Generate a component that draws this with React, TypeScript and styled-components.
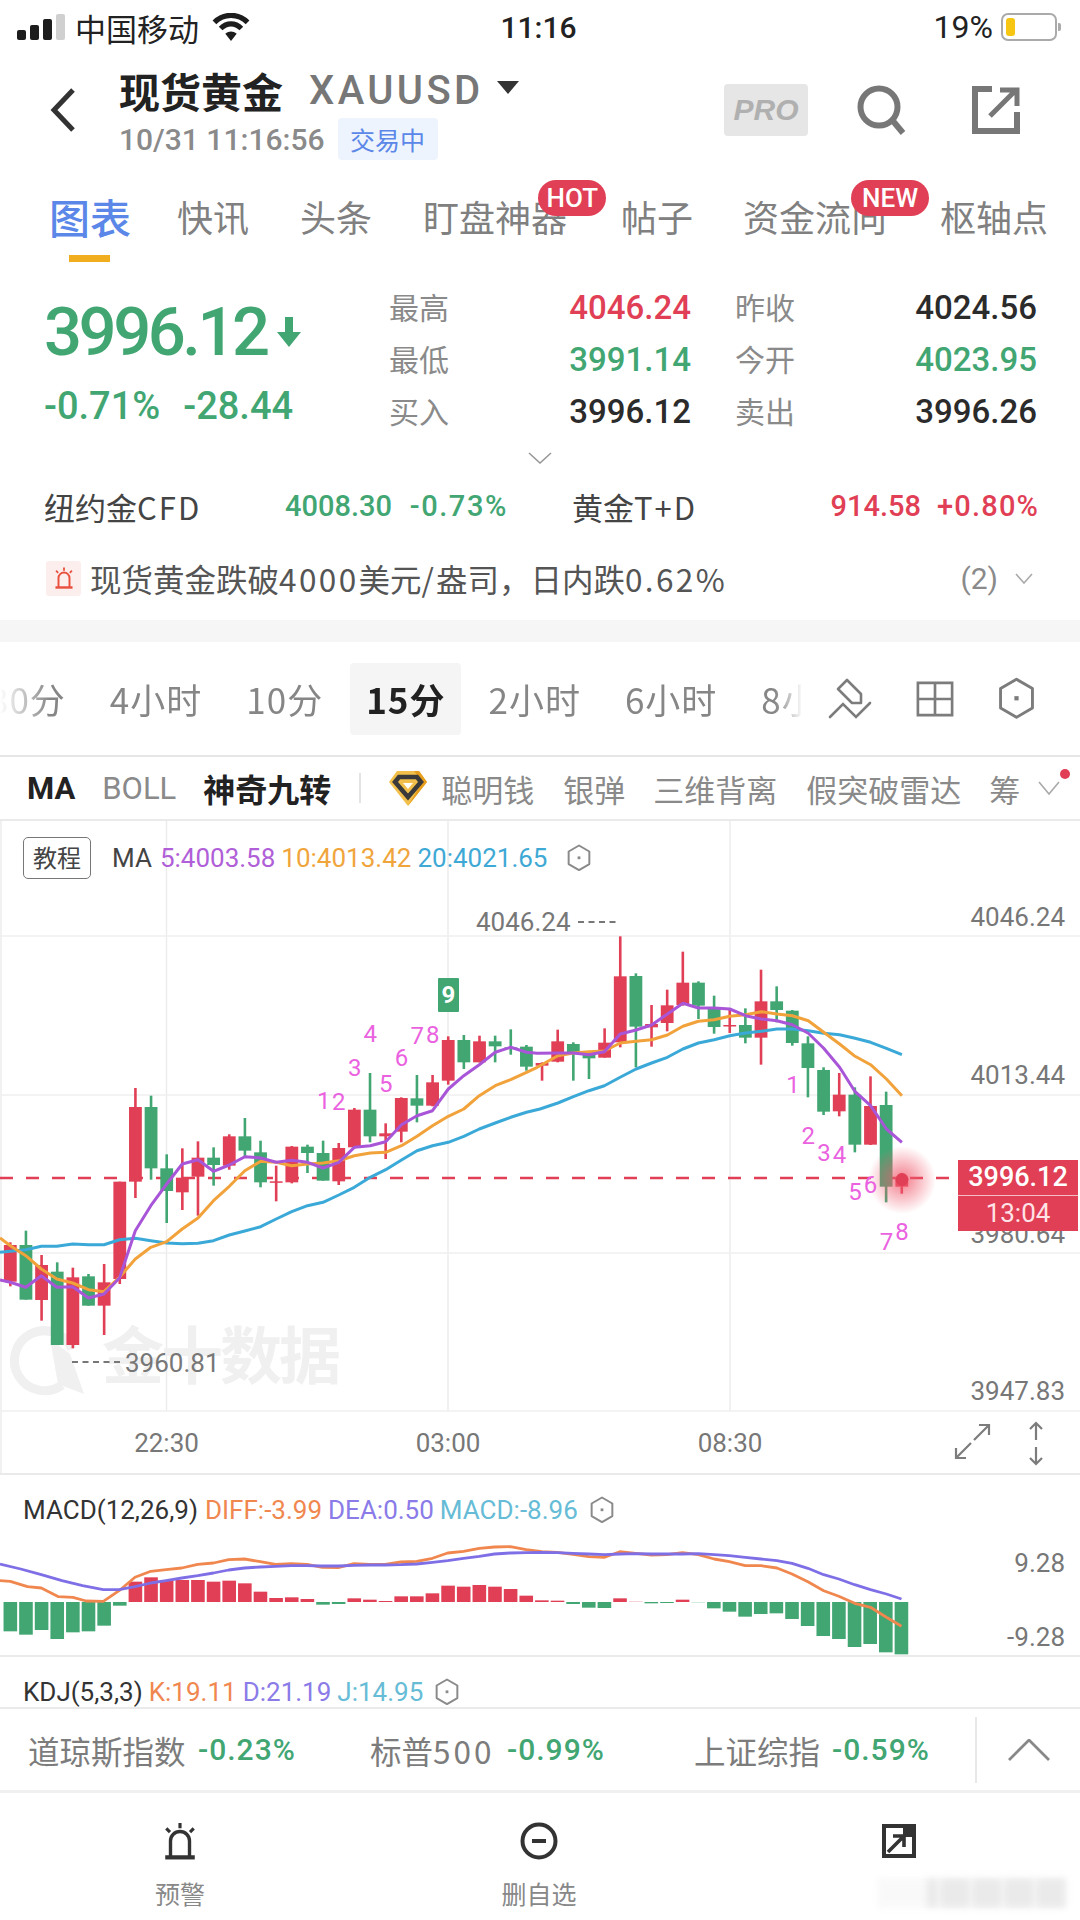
import React from "react";
import styled, { createGlobalStyle } from "styled-components";

const RED = "#e03f55";
const GREEN = "#42a673";
const BLUE = "#5b87e8";
const CJK = `"Noto Sans CJK SC", "Noto Sans", sans-serif`;
const NUM = `Roboto, "Noto Sans CJK SC", sans-serif`;

const Global = createGlobalStyle`
  html, body { margin: 0; padding: 0; background: #fff; }
  body { font-family: ${CJK}; }
  * { box-sizing: border-box; }
`;

const Page = styled.div`
  position: relative;
  width: 1080px;
  height: 1920px;
  overflow: hidden;
  background: #fff;
  color: #333;
`;

const Latin = styled.span<{ $ls: number }>`
  letter-spacing: ${(p) => p.$ls}px;
`;

/* status bar */
const StatusBar = styled.div`
  height: 54px;
  display: grid;
  grid-template-columns: 1fr auto 1fr;
  align-items: center;
  padding: 0 20px 0 17px;
  color: #222;
`;
const StatusLeft = styled.div`
  display: flex;
  align-items: center;
  font-size: 31px;
  font-weight: 400;
  line-height: 1;
  gap: 10px;
`;
const StatusWifi = styled.svg`
  margin-left: 2px;
`;
const StatusTime = styled.div`
  font-family: ${NUM};
  font-size: 30px;
  font-weight: 500;
`;
const StatusRight = styled.div`
  display: flex;
  justify-content: flex-end;
  align-items: center;
  font-family: ${NUM};
  font-size: 32px;
  gap: 8px;
`;
const Signal = styled.div`
  display: flex;
  align-items: flex-end;
  gap: 4px;
  height: 26px;
`;
const SignalBar = styled.i<{ $h: number; $off?: boolean }>`
  display: block;
  width: 9px;
  height: ${(p) => p.$h}px;
  border-radius: 2px;
  background: ${(p) => (p.$off ? "#d0d0d0" : "#1d1d1d")};
`;
const Battery = styled.div`
  position: relative;
  width: 56px;
  height: 28px;
  border: 2px solid #aaa;
  border-radius: 7px;
  padding: 3px;
  margin-right: 3px;
  &::after {
    content: "";
    position: absolute;
    right: -6px;
    top: 8px;
    width: 3px;
    height: 8px;
    border-radius: 0 2px 2px 0;
    background: #aaa;
  }
`;
const BatteryFill = styled.div`
  width: 9px;
  height: 100%;
  border-radius: 3px;
  background: #f6c612;
`;

/* header */
const Header = styled.div`
  height: 114px;
  display: flex;
  align-items: flex-start;
  padding: 16px 60px 0 50px;
`;
const BackBtn = styled.svg`
  width: 26px;
  height: 44px;
  margin-top: 18px;
  flex: none;
`;
const HeadText = styled.div`
  margin-left: 43px;
  display: flex;
  flex-direction: column;
`;
const TitleRow = styled.div`
  display: flex;
  align-items: center;
  height: 40px;
`;
const Title = styled.div`
  font-size: 41px;
  font-weight: 700;
  color: #222;
  line-height: 1;
`;
const Symbol = styled.div`
  font-family: ${NUM};
  font-size: 40px;
  font-weight: 500;
  color: #777;
  margin-left: 26px;
  letter-spacing: 3.4px;
`;
const Caret = styled.div`
  width: 0;
  height: 0;
  margin: -6px 0 0 13px;
  border-left: 11px solid transparent;
  border-right: 11px solid transparent;
  border-top: 13px solid #333;
`;
const SubRow = styled.div`
  display: flex;
  align-items: center;
  margin-top: 8px;
`;
const Stamp = styled.div`
  font-family: ${NUM};
  font-size: 30px;
  font-weight: 500;
  color: #8a8a8a;
`;
const StatusTag = styled.div`
  margin-left: 13px;
  width: 100px;
  height: 42px;
  background: #eef4fe;
  border-radius: 4px;
  color: ${BLUE};
  font-size: 25px;
  line-height: 42px;
  text-align: center;
`;
const HeadActions = styled.div`
  margin-left: auto;
  display: flex;
  align-items: center;
  padding-top: 14px;
`;
const ProBadge = styled.div`
  width: 84px;
  height: 52px;
  background: #e6e6e6;
  border-radius: 4px;
  color: #b0b0b0;
  font-family: "Liberation Sans", sans-serif;
  font-size: 30px;
  font-weight: 700;
  font-style: italic;
  line-height: 52px;
  text-align: center;
`;
const HeadIcon = styled.svg<{ $ml: number }>`
  display: block;
  margin-left: ${(p) => p.$ml}px;
`;

/* tabs */
const Tabs = styled.div`
  height: 102px;
  display: flex;
  align-items: flex-start;
  padding: 23px 0 0 49px;
`;
const Tab = styled.div<{ $active?: boolean; $ml?: number }>`
  position: relative;
  margin-left: ${(p) => p.$ml || 0}px;
  font-size: ${(p) => (p.$active ? 41 : 36)}px;
  font-weight: ${(p) => (p.$active ? 500 : 400)};
  line-height: 50px;
  color: ${(p) => (p.$active ? BLUE : "#808080")};
  white-space: nowrap;
`;
const TabMark = styled.div`
  position: absolute;
  left: 20px;
  top: 64px;
  width: 41px;
  height: 7px;
  background: #f0ad1e;
`;
const TabBadge = styled.div<{ $right: number; $pad: number }>`
  position: absolute;
  top: -11px;
  right: ${(p) => p.$right}px;
  height: 36px;
  padding: 0 ${(p) => p.$pad}px;
  border-radius: 18px;
  background: ${RED};
  color: #fff;
  font-family: ${NUM};
  font-size: 26px;
  font-weight: 500;
  line-height: 36px;
`;

/* quote */
const Quote = styled.div`
  height: 166px;
  display: flex;
  padding: 12px 43px 0 44px;
`;
const PriceCol = styled.div`
  width: 345px;
  flex: none;
  padding-top: 12px;
`;
const BigPrice = styled.div`
  display: flex;
  align-items: center;
  height: 76px;
  color: ${GREEN};
  font-family: ${NUM};
  font-size: 67px;
  font-weight: 500;
  letter-spacing: -3.5px;
  line-height: 76px;
`;
const DownArrow = styled.svg`
  margin-left: 9px;
  flex: none;
`;
const PriceDelta = styled.div`
  display: flex;
  gap: 23px;
  margin-top: 14px;
  color: ${GREEN};
  font-family: ${NUM};
  font-size: 38px;
  font-weight: 500;
  line-height: 44px;
`;
const StatGrid = styled.div`
  flex: 1;
  display: grid;
  grid-template-columns: 62px 284px 62px 1fr;
  grid-auto-rows: 52px;
  align-items: center;
`;
const StatLabel = styled.div`
  font-size: 30px;
  color: #8a8a8a;
  line-height: 48px;
  padding-bottom: 4px;
  white-space: nowrap;
`;
const StatValue = styled.div<{ $c: string; $pad?: number }>`
  font-family: ${NUM};
  font-size: 33px;
  font-weight: 500;
  color: ${(p) => p.$c};
  text-align: right;
  padding-right: ${(p) => p.$pad || 0}px;
  line-height: 52px;
`;
const Expand = styled.div`
  height: 36px;
  display: flex;
  justify-content: center;
  padding-top: 16px;
`;

const Related = styled.div`
  height: 68px;
  display: flex;
  align-items: center;
  padding: 0 43px 0 44px;
`;
const RelatedName = styled.div<{ $w: number }>`
  width: ${(p) => p.$w}px;
  font-size: 31px;
  color: #444;
  white-space: nowrap;
`;
const RelatedNum = styled.div<{ $c: string; $w: number; $mr?: number; $ls?: number }>`
  font-family: ${NUM};
  font-size: 29px;
  font-weight: 500;
  letter-spacing: ${(p) => p.$ls || 0}px;
  color: ${(p) => p.$c};
  width: ${(p) => p.$w}px;
  text-align: right;
  margin-right: ${(p) => p.$mr || 0}px;
  white-space: nowrap;
`;
const Flexible = styled.div`
  flex: 1;
`;

const AlertRow = styled.div`
  height: 80px;
  display: flex;
  align-items: center;
  padding: 0 47px 4px 46px;
`;
const AlertIcon = styled.div`
  width: 35px;
  height: 35px;
  background: #fdeeee;
  border-radius: 3px;
  display: flex;
  align-items: center;
  justify-content: center;
  flex: none;
`;
const AlertText = styled.div`
  margin-left: 9px;
  font-size: 31.5px;
  color: #555;
  white-space: nowrap;
`;
const AlertMore = styled.div`
  margin-left: auto;
  display: flex;
  align-items: center;
  gap: 17px;
  font-family: ${NUM};
  font-size: 30px;
  color: #8a8a8a;
`;

const Gap = styled.div`
  height: 22px;
  background: #f6f6f6;
`;

/* periods */
const Periods = styled.div`
  height: 115px;
  display: flex;
  align-items: center;
  border-bottom: 2px solid #e6e6e6;
`;
const PeriodStrip = styled.div`
  width: 803px;
  height: 72px;
  overflow: hidden;
  flex: none;
  -webkit-mask-image: linear-gradient(90deg, transparent 0, #000 50px, #000 775px, transparent 803px);
  mask-image: linear-gradient(90deg, transparent 0, #000 50px, #000 775px, transparent 803px);
`;
const PeriodTrack = styled.div`
  display: flex;
  align-items: center;
  height: 72px;
  margin-left: -33px;
  width: 1000px;
`;
const Period = styled.div<{ $active?: boolean }>`
  height: 72px;
  padding: 0 ${(p) => (p.$active ? 16 : 22)}px;
  margin: 0 ${(p) => (p.$active ? 5 : 0)}px;
  border-radius: 4px;
  background: ${(p) => (p.$active ? "#f5f5f5" : "transparent")};
  font-size: 35px;
  letter-spacing: 1px;
  line-height: 72px;
  font-weight: ${(p) => (p.$active ? 700 : 400)};
  color: ${(p) => (p.$active ? "#222" : "#868686")};
  white-space: nowrap;
`;
const ToolIcon = styled.svg<{ $ml: number }>`
  margin-left: ${(p) => p.$ml}px;
  flex: none;
`;
const ToolBox = styled.div<{ $ml: number }>`
  margin-left: ${(p) => p.$ml}px;
  flex: none;
`;

/* indicators */
const Indicators = styled.div`
  height: 64px;
  display: flex;
  align-items: center;
  padding: 0 0 0 27px;
  border-bottom: 2px solid #eaeaea;
  position: relative;
`;
const Ind = styled.div<{ $ml: number; $bold?: boolean; $size?: number }>`
  margin-left: ${(p) => p.$ml}px;
  font-family: ${CJK};
  font-size: ${(p) => p.$size || 31}px;
  font-weight: ${(p) => (p.$bold ? 700 : 400)};
  color: ${(p) => (p.$bold ? "#222" : "#8a8a8a")};
  white-space: nowrap;
`;
const IndLatin = styled(Ind)`
  font-family: ${NUM};
  font-size: 31px;
`;
const IndDivider = styled.div`
  width: 2px;
  height: 30px;
  background: #e4e4e4;
  margin-left: 28px;
`;
const IndIcon = styled.svg`
  margin-left: 27px;
  flex: none;
`;
const IndChevron = styled.svg`
  margin-left: 18px;
  flex: none;
`;
const RedDot = styled.div`
  position: absolute;
  left: 1060px;
  top: 12px;
  width: 10px;
  height: 10px;
  border-radius: 50%;
  background: ${RED};
`;

/* chart */
const ChartPanel = styled.div`
  position: relative;
  height: 654px;
  border-bottom: 2px solid #eaeaea;
`;
const ChartSvg = styled.svg`
  display: block;
  width: 1080px;
`;
const Legend = styled.div<{ $left: number; $top: number }>`
  position: absolute;
  left: ${(p) => p.$left}px;
  top: ${(p) => p.$top}px;
  display: flex;
  align-items: center;
  font-family: ${NUM};
  font-size: 26px;
  line-height: 42px;
  white-space: nowrap;
`;
const Tutorial = styled.div`
  width: 68px;
  height: 42px;
  border: 1.5px solid #777;
  border-radius: 5px;
  font-family: ${CJK};
  font-size: 24px;
  line-height: 38px;
  text-align: center;
  color: #444;
  margin-right: 21px;
`;
const LegendPart = styled.span<{ $c: string; $mr?: number }>`
  color: ${(p) => p.$c};
  margin-right: ${(p) => p.$mr ?? 7}px;
`;
const PriceTag = styled.div`
  position: absolute;
  left: 958px;
  top: 339px;
  width: 120px;
  height: 71px;
  background: ${RED};
  color: #fff;
  font-family: ${NUM};
  text-align: center;
`;
const PriceTagTop = styled.div`
  height: 36px;
  border-bottom: 1px solid rgba(255, 255, 255, 0.65);
  font-size: 27px;
  font-weight: 500;
  line-height: 34px;
`;
const PriceTagBottom = styled.div`
  height: 35px;
  font-size: 26px;
  line-height: 35px;
  color: #ffe3e6;
`;

const SubPanel = styled.div<{ $h: number }>`
  position: relative;
  height: ${(p) => p.$h}px;
  border-bottom: 2px solid #eaeaea;
`;

/* index strip */
const IndexStrip = styled.div`
  height: 84px;
  display: flex;
  align-items: center;
  padding-left: 28px;
  border-bottom: 3px solid #f0f0f0;
`;
const IndexName = styled.div<{ $w: number }>`
  width: ${(p) => p.$w}px;
  font-size: 31.5px;
  color: #7c7c7c;
  white-space: nowrap;
`;
const IndexVal = styled.div<{ $w: number }>`
  width: ${(p) => p.$w}px;
  font-family: ${NUM};
  font-size: 30px;
  font-weight: 500;
  letter-spacing: 1px;
  color: ${GREEN};
  white-space: nowrap;
`;
const IndexToggle = styled.div`
  margin-left: auto;
  width: 105px;
  height: 66px;
  border-left: 2px solid #e8e8e8;
  display: flex;
  align-items: center;
  justify-content: center;
`;

/* bottom tabs */
const BottomBar = styled.div`
  flex: 1;
  display: grid;
  grid-template-columns: 360px 358px 1fr;
  height: 127px;
  padding-top: 28px;
`;
const BottomItem = styled.div`
  display: flex;
  flex-direction: column;
  align-items: center;
`;
const BottomIconBox = styled.div`
  width: 40px;
  height: 40px;
  display: flex;
  align-items: center;
  justify-content: center;
`;
const BottomLabel = styled.div`
  margin-top: 14px;
  font-size: 25px;
  line-height: 36px;
  color: #888;
`;
const BlurMark = styled.div`
  position: absolute;
  left: 877px;
  top: 1878px;
  width: 190px;
  height: 30px;
  filter: blur(3px);
  opacity: 0.5;
  background: linear-gradient(90deg, #f4f4f4 0 50px, transparent 50px),
    repeating-linear-gradient(90deg, #d6d6d6 0 28px, #f0f0f0 28px 32px);
`;

/* data */
const CW = 15.64;
const cx = (i: number) => 10.3 + i * CW;
const y4 = (z: number) => 900 + z / 3;
type C = [number, number, number, number, "r" | "g"];
const CANDLES: C[] = [
  [1030, 1038, 1148, 1162, "r"], [995, 1038, 1202, 1202, "g"], [1068, 1098, 1203, 1265, "r"], [1090, 1118, 1338, 1338, "g"],
  [1106, 1135, 1338, 1348, "r"], [1125, 1132, 1220, 1220, "g"], [1095, 1150, 1220, 1308, "r"], [848, 848, 1140, 1155, "r"],
  [567, 624, 848, 897, "r"], [590, 624, 808, 842, "g"], [766, 808, 876, 972, "g"], [748, 836, 880, 933, "r"],
  [727, 776, 833, 950, "r"], [745, 776, 798, 860, "g"], [706, 712, 800, 812, "r"], [657, 712, 755, 775, "g"],
  [725, 760, 850, 865, "g"], [800, 847, 851, 907, "r"], [741, 743, 850, 853, "r"], [737, 743, 762, 822, "g"],
  [725, 762, 845, 845, "g"], [732, 747, 847, 858, "r"], [627, 632, 745, 748, "r"], [522, 632, 712, 730, "g"],
  [673, 703, 712, 780, "r"], [595, 597, 698, 730, "r"], [528, 598, 620, 670, "g"], [528, 550, 620, 622, "r"],
  [412, 423, 545, 557, "r"], [408, 423, 490, 510, "g"], [410, 427, 490, 490, "r"], [410, 427, 442, 490, "g"],
  [391, 445, 448, 467, "g"], [438, 443, 503, 515, "g"], [490, 492, 500, 545, "r"],
  [392, 427, 488, 490, "r"], [430, 435, 462, 545, "g"], [462, 465, 478, 540, "g"], [388, 431, 476, 476, "r"],
  [112, 232, 430, 445, "r"], [223, 231, 383, 505, "g"], [318, 375, 385, 443, "r"], [272, 319, 372, 397, "r"],
  [158, 251, 318, 320, "r"], [247, 251, 320, 360, "g"], [290, 325, 384, 404, "g"], [330, 378, 382, 402, "r"],
  [328, 378, 416, 433, "g"], [212, 307, 416, 497, "r"], [262, 307, 333, 370, "g"], [333, 335, 432, 440, "g"],
  [412, 433, 507, 595, "g"], [505, 513, 638, 648, "g"], [522, 587, 637, 652, "r"], [565, 587, 737, 760, "g"],
  [532, 621, 737, 738, "r"], [578, 618, 863, 910, "g"], [822, 836, 863, 884, "r"],
];

const xa = (z: number) => z / 2.904;
const xb = (z: number) => 540 + z / 2.904;
const toPts = (a: number[][], b: number[][]) =>
  [...a.map(([x, y]) => `${xa(x).toFixed(1)},${y4(y).toFixed(1)}`), ...b.map(([x, y]) => `${xb(x).toFixed(1)},${y4(y).toFixed(1)}`)].join(" ");

const MA5 = toPts(
  [[0,1143],[30,1150],[75,1165],[120,1130],[165,1165],[211,1163],[257,1197],[302,1185],[347,1137],[393,995],[438,920],[484,855],[529,795],[575,782],[620,817],[666,798],[711,773],[757,777],[802,790],[847,784],[893,790],[938,807],[984,790],[1029,745],[1075,740],[1120,728],[1166,677],[1211,650],[1256,635],[1302,570],[1347,530],[1392,497],[1438,460],[1483,445],[1529,460],[1560,463]],
  [[52,462],[97,462],[142,467],[187,458],[233,405],[279,393],[324,378],[370,345],[415,313],[460,327],[506,327],[551,330],[597,350],[642,360],[688,365],[733,377],[779,403],[824,448],[870,505],[915,578],[960,620],[1006,690],[1051,730]]
);
const MA10 = toPts(
  [[0,1017],[30,1040],[75,1070],[120,1110],[165,1140],[211,1152],[257,1172],[302,1178],[347,1135],[393,1080],[438,1045],[484,1028],[529,990],[575,957],[620,905],[666,862],[711,815],[757,787],[802,790],[847,800],[893,795],[938,792],[984,785],[1029,770],[1075,762],[1120,760],[1166,740],[1211,712],[1256,680],[1302,652],[1347,630],[1392,590],[1438,560],[1483,542],[1529,520],[1560,505]],
  [[52,470],[97,462],[142,458],[187,456],[233,432],[279,427],[324,422],[370,408],[415,382],[460,367],[506,362],[551,352],[597,347],[642,338],[688,345],[733,350],[779,365],[824,400],[870,435],[915,472],[960,497],[1006,540],[1051,590]]
);
const MA20 = toPts(
  [[0,1060],[75,1052],[120,1042],[165,1042],[211,1035],[257,1037],[302,1037],[347,1022],[393,1018],[438,1025],[484,1032],[529,1034],[575,1033],[620,1025],[666,1008],[711,996],[757,983],[802,960],[847,938],[893,920],[938,910],[984,888],[1029,865],[1075,835],[1120,812],[1166,783],[1211,755],[1256,740],[1302,730],[1347,712],[1392,690],[1438,672],[1483,655],[1529,640]],
  [[0,630],[52,612],[97,593],[142,575],[187,560],[233,535],[279,510],[324,492],[370,475],[415,450],[460,432],[506,422],[551,410],[597,402],[642,397],[688,390],[733,390],[779,395],[824,403],[870,407],[915,418],[960,430],[1006,448],[1051,467]]
);

const NINE_A: [string, number, number][] = [["1",940,603],["2",984,607],["3",1030,504],["4",1075,402],["5",1120,552],["6",1166,473],["7",1212,407],["8",1257,405]];
const NINE_B: [string, number, number][] = [["1",735,555],["2",779,708],["3",825,760],["4",870,765],["5",915,875],["6",960,855],["7",1006,1025],["8",1051,997]];

const xm = (z: number) => z / 1.452;
const ym = (z: number) => 1420 + z / 3;
const HIST: number[] = [637,647,633,660,640,637,620,560,488,475,483,483,483,488,485,493,518,537,535,540,557,555,538,542,546,532,532,523,500,503,498,503,510,530,544,545,555,566,567,538,547,553,552,542,551,568,578,593,585,583,600,621,651,660,684,675,700,706];
const DIFF = [[0,485],[15,487],[40,503],[60,507],[85,533],[106,535],[125,546],[150,547],[173,515],[196,475],[219,457],[241,452],[264,447],[287,436],[310,432],[332,422],[355,420],[378,428],[400,436],[423,434],[446,436],[468,445],[491,446],[514,434],[537,436],[559,436],[582,429],[605,427],[628,418],[650,402],[673,397],[696,388],[718,384],[741,383],[764,392],[787,398],[809,400],[832,406],[855,413],[878,415],[900,398],[923,403],[946,408],[968,407],[991,401],[1014,407],[1037,420],[1059,428],[1082,440],[1105,440],[1128,447],[1150,465],[1173,488],[1196,515],[1218,532],[1241,553],[1264,565],[1287,595],[1309,622]];
const DEA = [[0,435],[30,450],[60,467],[90,485],[120,500],[150,512],[173,512],[196,503],[219,492],[241,485],[264,477],[287,470],[310,462],[332,453],[355,447],[378,444],[400,442],[423,440],[446,440],[468,441],[491,441],[514,439],[537,438],[559,438],[582,437],[605,435],[628,430],[650,425],[673,418],[696,412],[718,405],[741,402],[764,401],[787,400],[809,401],[832,403],[855,405],[878,407],[900,405],[923,404],[946,405],[968,405],[991,405],[1014,404],[1037,407],[1059,410],[1082,415],[1105,420],[1128,425],[1150,433],[1173,448],[1196,467],[1218,480],[1241,497],[1264,512],[1287,525],[1309,540]];
const mPts = (a: number[][]) => a.map(([x, y]) => `${xm(x).toFixed(1)},${ym(y).toFixed(1)}`).join(" ");

const Hex = ({ s = 24, c = "#8a8a8a", w = 2 }: { s?: number; c?: string; w?: number }) => (
  <svg width={s} height={s * 1.15} viewBox="0 0 24 28" style={{ display: "block" }}>
    <path d="M12 1.5 L22.5 7.6 V20.4 L12 26.5 L1.5 20.4 V7.6 Z" fill="none" stroke={c} strokeWidth={w} strokeLinejoin="round" />
    <rect x="10.6" y="12.6" width="2.8" height="2.8" fill={c} />
  </svg>
);

const AlarmIcon = ({ c, s }: { c: string; s: number }) => (
  <svg width={s} height={s} viewBox="0 0 34 36" style={{ display: "block" }}>
    <path d="M8 33 V18 a9 9 0 0 1 18 0 V33" fill="none" stroke={c} strokeWidth="3.2" />
    <path d="M3 33.5 H31" stroke={c} strokeWidth="4" />
    <path d="M17 1 V6 M4 6 L7.5 9.5 M30 6 L26.5 9.5" stroke={c} strokeWidth="3" />
  </svg>
);

export default function App() {
  return (
    <Page>
      <Global />
      <StatusBar>
        <StatusLeft>
          <Signal>
            <SignalBar $h={10} />
            <SignalBar $h={15} />
            <SignalBar $h={21} />
            <SignalBar $h={26} $off />
          </Signal>
          <span>中国移动</span>
          <StatusWifi width="40" height="29" viewBox="0 0 38 28">
            <path d="M3 9 C12 0 26 0 35 9" fill="none" stroke="#1d1d1d" strokeWidth="5" />
            <path d="M9 15 C15 9 23 9 29 15" fill="none" stroke="#1d1d1d" strokeWidth="5" />
            <path d="M13.5 20 C17 17 21 17 24.5 20 L19 27 Z" fill="#1d1d1d" />
          </StatusWifi>
        </StatusLeft>
        <StatusTime>11:16</StatusTime>
        <StatusRight>
          <span>19%</span>
          <Battery>
            <BatteryFill />
          </Battery>
        </StatusRight>
      </StatusBar>

      <Header>
        <BackBtn viewBox="0 0 26 44">
          <path d="M23 2 L4 22 L23 42" fill="none" stroke="#333" strokeWidth="5" />
        </BackBtn>
        <HeadText>
          <TitleRow>
            <Title>现货黄金</Title>
            <Symbol>XAUUSD</Symbol>
            <Caret />
          </TitleRow>
          <SubRow>
            <Stamp>10/31 11:16:56</Stamp>
            <StatusTag>交易中</StatusTag>
          </SubRow>
        </HeadText>
        <HeadActions>
          <ProBadge>PRO</ProBadge>
          <HeadIcon $ml={48} width="52" height="52" viewBox="0 0 52 52">
            <circle cx="23" cy="23" r="18.5" fill="none" stroke="#777" strokeWidth="6" />
            <path d="M37 37 L47 49" stroke="#777" strokeWidth="6" />
          </HeadIcon>
          <HeadIcon $ml={64} width="48" height="48" viewBox="0 0 48 48">
            <path d="M20 3 H3 V45 H45 V26" fill="none" stroke="#777" strokeWidth="6" />
            <path d="M18 30 L42 6 M28 4 H45 V20" fill="none" stroke="#777" strokeWidth="5" />
          </HeadIcon>
        </HeadActions>
      </Header>

      <Tabs>
        <Tab $active>
          图表
          <TabMark />
        </Tab>
        <Tab $ml={46}>快讯</Tab>
        <Tab $ml={51}>头条</Tab>
        <Tab $ml={51}>
          盯盘神器
          <TabBadge $right={-39} $pad={8}>HOT</TabBadge>
        </Tab>
        <Tab $ml={54}>帖子</Tab>
        <Tab $ml={50}>
          资金流向
          <TabBadge $right={-42} $pad={11}>NEW</TabBadge>
        </Tab>
        <Tab $ml={53}>枢轴点</Tab>
      </Tabs>

      <Quote>
        <PriceCol>
          <BigPrice>
            3996.12
            <DownArrow width="26" height="30" viewBox="0 0 26 30">
              <path d="M9 0 H17 V15 H25 L13 30 L1 15 H9 Z" fill={GREEN} />
            </DownArrow>
          </BigPrice>
          <PriceDelta>
            <span>-0.71%</span>
            <span>-28.44</span>
          </PriceDelta>
        </PriceCol>
        <StatGrid>
          <StatLabel>最高</StatLabel>
          <StatValue $c={RED} $pad={44}>4046.24</StatValue>
          <StatLabel>昨收</StatLabel>
          <StatValue $c="#2b2b2b">4024.56</StatValue>
          <StatLabel>最低</StatLabel>
          <StatValue $c={GREEN} $pad={44}>3991.14</StatValue>
          <StatLabel>今开</StatLabel>
          <StatValue $c={GREEN}>4023.95</StatValue>
          <StatLabel>买入</StatLabel>
          <StatValue $c="#2b2b2b" $pad={44}>3996.12</StatValue>
          <StatLabel>卖出</StatLabel>
          <StatValue $c="#2b2b2b">3996.26</StatValue>
        </StatGrid>
      </Quote>

      <Expand>
        <svg width="24" height="12" viewBox="0 0 24 12">
          <path d="M1 1 L12 11 L23 1" fill="none" stroke="#999" strokeWidth="1.6" />
        </svg>
      </Expand>

      <Related>
        <RelatedName $w={157}>纽约金<Latin $ls={2}>CFD</Latin></RelatedName>
        <RelatedNum $c={GREEN} $w={191}>4008.30</RelatedNum>
        <RelatedNum $c={GREEN} $w={116} $mr={64} $ls={1.6}>-0.73%</RelatedNum>
        <RelatedName $w={124}>黄金<Latin $ls={2}>T+D</Latin></RelatedName>
        <Flexible />
        <RelatedNum $c={RED} $w={100} $mr={16}>914.58</RelatedNum>
        <RelatedNum $c={RED} $w={100} $ls={1.2}>+0.80%</RelatedNum>
      </Related>

      <AlertRow>
        <AlertIcon>
          <AlarmIcon c="#e8503f" s={22} />
        </AlertIcon>
        <AlertText>
          现货黄金跌破<Latin $ls={2.4}>4000</Latin>美元<Latin $ls={2}>/</Latin>盎司，日内跌<Latin $ls={2.4}>0.62%</Latin>
        </AlertText>
        <AlertMore>
          <span>(2)</span>
          <svg width="18" height="11" viewBox="0 0 18 11">
            <path d="M1 1 L9 10 L17 1" fill="none" stroke="#aaa" strokeWidth="1.6" />
          </svg>
        </AlertMore>
      </AlertRow>

      <Gap />

      <Periods>
        <PeriodStrip>
          <PeriodTrack>
            <Period>30分</Period>
            <Period>4小时</Period>
            <Period>10分</Period>
            <Period $active>15分</Period>
            <Period>2小时</Period>
            <Period>6小时</Period>
            <Period>8小时</Period>
          </PeriodTrack>
        </PeriodStrip>
        <ToolIcon $ml={25} width="46" height="42" viewBox="0 0 46 42">
          <path d="M19 2 L10 11 L24 25 H33 V16 Z" fill="none" stroke="#7c7c7c" strokeWidth="2.6" strokeLinejoin="round" />
          <path d="M2 39 L15 26 L28 39 L42 25" fill="none" stroke="#7c7c7c" strokeWidth="2.6" strokeLinecap="round" />
        </ToolIcon>
        <ToolIcon $ml={42} width="38" height="38" viewBox="0 0 40 38">
          <path d="M2 2 H38 V36 H2 Z M20 2 V36 M2 19 H38" fill="none" stroke="#7c7c7c" strokeWidth="2.8" />
        </ToolIcon>
        <ToolBox $ml={44}>
          <Hex s={37} c="#7c7c7c" w={1.9} />
        </ToolBox>
      </Periods>

      <Indicators>
        <IndLatin $ml={0} $bold>MA</IndLatin>
        <IndLatin $ml={27}>BOLL</IndLatin>
        <Ind $ml={27} $bold $size={32}>神奇九转</Ind>
        <IndDivider />
        <IndIcon width="40" height="38" viewBox="0 0 40 38">
          <path d="M9 2 H31 L39 13 L20 37 L1 13 Z" fill="#f2c04a" />
          <path d="M20 37 L39 13 L31 2 H26 L34 13 Z" fill="#e79e1c" />
          <path d="M11 8 H29 L33 13 L20 28 L7 13 Z" fill="none" stroke="#3a3a3a" strokeWidth="4.5" />
          <path d="M15 14 H25 L20 20 Z" fill="#fff" />
        </IndIcon>
        <Ind $ml={13}>聪明钱</Ind>
        <Ind $ml={29}>银弹</Ind>
        <Ind $ml={28}>三维背离</Ind>
        <Ind $ml={29}>假突破雷达</Ind>
        <Ind $ml={28}>筹</Ind>
        <IndChevron width="22" height="14" viewBox="0 0 22 14">
          <path d="M1 1 L11 13 L21 1" fill="none" stroke="#aaa" strokeWidth="1.6" />
        </IndChevron>
        <RedDot />
      </Indicators>

      <ChartPanel>
        <ChartSvg height="652" viewBox="0 822 1080 652">
          <defs>
            <radialGradient id="glow">
              <stop offset="0%" stopColor="#ef5a6c" stopOpacity="0.8" />
              <stop offset="50%" stopColor="#ef5a6c" stopOpacity="0.4" />
              <stop offset="100%" stopColor="#ef5a6c" stopOpacity="0" />
            </radialGradient>
          </defs>
          <path d="M1 822 V1474 M166.5 822 V1412 M448 822 V1412 M730 822 V1412" stroke="#ececec" strokeWidth="1.4" />
          <path d="M0 937 H1080 M0 1096 H1080 M0 1254 H1080 M0 1412 H1080" stroke="#efefef" strokeWidth="1.6" />

          <text x="220" y="1380" fontFamily={CJK} fontSize="62" fontWeight="700" fill="#f0f0f0" textAnchor="middle" letterSpacing="-3">金十数据</text>
          <path d="M72 1350 A30 30 0 1 0 62 1386" fill="none" stroke="#f0f0f0" strokeWidth="9" />
          <path d="M50 1340 L58 1385 L84 1395 L70 1355 Z" fill="#f0f0f0" />

          <line x1="0" x2="958" y1="1179" y2="1179" stroke={RED} strokeWidth="2.6" strokeDasharray="13 13" />

          {CANDLES.map(([h, t, b, l, k], i) => {
            const col = k === "r" ? RED : GREEN;
            const x = cx(i);
            return (
              <g key={i} fill={col}>
                <rect x={x - 1.3} y={y4(h)} width="2.6" height={y4(l) - y4(h)} />
                <rect x={x - 6.4} y={y4(t)} width="12.8" height={Math.max(y4(b) - y4(t), 1.5)} />
              </g>
            );
          })}

          <polyline points={MA20} fill="none" stroke="#3ba9d8" strokeWidth="3" strokeLinejoin="round" />
          <polyline points={MA10} fill="none" stroke="#f2a23a" strokeWidth="3" strokeLinejoin="round" />
          <polyline points={MA5} fill="none" stroke="#a855d8" strokeWidth="3" strokeLinejoin="round" />

          <circle cx="902" cy="1181" r="34" fill="url(#glow)" />
          <circle cx="902" cy="1180.5" r="6.4" fill={RED} />

          <g fontFamily={NUM} fontSize="24" fill="#ea62e0" textAnchor="middle">
            {NINE_A.map(([t, x, y], i) => (
              <text key={i} x={xa(x)} y={y4(y) + 9}>{t}</text>
            ))}
            {NINE_B.map(([t, x, y], i) => (
              <text key={i} x={xb(x)} y={y4(y) + 9}>{t}</text>
            ))}
          </g>
          <rect x="438" y="979" width="21" height="34" fill={GREEN} rx="1" />
          <text x="448.5" y="1004" fontFamily={NUM} fontSize="24" fontWeight="700" fill="#fff" textAnchor="middle">9</text>

          <g fontFamily={NUM} fontSize="26" fill="#777">
            <text x="1065" y="927" textAnchor="end">4046.24</text>
            <text x="1065" y="1085" textAnchor="end">4013.44</text>
            <text x="1065" y="1244" textAnchor="end">3980.64</text>
            <text x="1065" y="1401" textAnchor="end">3947.83</text>
            <text x="476" y="932">4046.24</text>
            <text x="125" y="1373">3960.81</text>
            <text x="166.5" y="1453" textAnchor="middle">22:30</text>
            <text x="448" y="1453" textAnchor="middle">03:00</text>
            <text x="730" y="1453" textAnchor="middle">08:30</text>
          </g>
          <path d="M578 923 H617 M72 1363 H120" stroke="#777" strokeWidth="1.8" strokeDasharray="6 4.5" />

          <g fill="none" stroke="#7c7c7c" strokeWidth="2.2">
            <path d="M974 1441 L989 1426 M979 1426 H989 V1436" />
            <path d="M956 1459 L971 1444 M956 1449 V1459 H966" />
            <path d="M1036 1424 V1441 M1030 1430 L1036 1424 L1042 1430" />
            <path d="M1036 1448 V1465 M1030 1459 L1036 1465 L1042 1459" />
          </g>
        </ChartSvg>
        <Legend $left={23} $top={16}>
          <Tutorial>教程</Tutorial>
          <LegendPart $c="#444" $mr={8}>MA</LegendPart>
          <LegendPart $c="#b05fd8" $mr={6}>5:4003.58</LegendPart>
          <LegendPart $c="#f0a53c" $mr={6}>10:4013.42</LegendPart>
          <LegendPart $c="#3fa9d5" $mr={20}>20:4021.65</LegendPart>
          <Hex s={24} />
        </Legend>
        <PriceTag>
          <PriceTagTop>3996.12</PriceTagTop>
          <PriceTagBottom>13:04</PriceTagBottom>
        </PriceTag>
      </ChartPanel>

      <SubPanel $h={182}>
        <ChartSvg height="180" viewBox="0 1476 1080 180">
          {HIST.map((v, i) => {
            const base = 549;
            const x = xm(15 + 22.7 * i);
            const up = v < base;
            const pale = i === 40 || i === 44;
            const top = up ? ym(v) : ym(base);
            const h = Math.abs(ym(v) - ym(base));
            const col = up ? RED : GREEN;
            return <rect key={i} x={x - 6.8} y={top} width="13.6" height={h} fill={col} opacity={pale ? 0.35 : 1} />;
          })}
          <polyline points={mPts(DIFF)} fill="none" stroke="#f0874f" strokeWidth="2.8" strokeLinejoin="round" />
          <polyline points={mPts(DEA)} fill="none" stroke="#7e6fe6" strokeWidth="2.8" strokeLinejoin="round" />
          <g fontFamily={NUM} fontSize="26" fill="#777" textAnchor="end">
            <text x="1065" y="1573">9.28</text>
            <text x="1065" y="1647">-9.28</text>
          </g>
        </ChartSvg>
        <Legend $left={23} $top={14}>
          <LegendPart $c="#333">MACD(12,26,9)</LegendPart>
          <LegendPart $c="#f0874f" $mr={6}>DIFF:-3.99</LegendPart>
          <LegendPart $c="#8a7be8" $mr={6}>DEA:0.50</LegendPart>
          <LegendPart $c="#66bcd6" $mr={12}>MACD:-8.96</LegendPart>
          <Hex s={24} />
        </Legend>
      </SubPanel>

      <SubPanel $h={52}>
        <Legend $left={23} $top={14}>
          <LegendPart $c="#333" $mr={6}>KDJ(5,3,3)</LegendPart>
          <LegendPart $c="#f0874f" $mr={6}>K:19.11</LegendPart>
          <LegendPart $c="#8a7be8" $mr={6}>D:21.19</LegendPart>
          <LegendPart $c="#66bcd6" $mr={12}>J:14.95</LegendPart>
          <Hex s={24} />
        </Legend>
      </SubPanel>

      <IndexStrip>
        <IndexName $w={170}>道琼斯指数</IndexName>
        <IndexVal $w={172}>-0.23%</IndexVal>
        <IndexName $w={137}>标普<Latin $ls={3}>500</Latin></IndexName>
        <IndexVal $w={187}>-0.99%</IndexVal>
        <IndexName $w={138}>上证综指</IndexName>
        <IndexVal $w={100}>-0.59%</IndexVal>
        <IndexToggle>
          <svg width="42" height="22" viewBox="0 0 42 22">
            <path d="M1 21 L21 1 L41 21" fill="none" stroke="#888" strokeWidth="2.8" />
          </svg>
        </IndexToggle>
      </IndexStrip>

      <BottomBar>
        <BottomItem>
          <BottomIconBox>
            <AlarmIcon c="#333" s={38} />
          </BottomIconBox>
          <BottomLabel>预警</BottomLabel>
        </BottomItem>
        <BottomItem>
          <BottomIconBox>
            <svg width="38" height="38" viewBox="0 0 38 38">
              <circle cx="19" cy="19" r="16.5" fill="none" stroke="#333" strokeWidth="4" />
              <path d="M12 19 H26" stroke="#333" strokeWidth="4" />
            </svg>
          </BottomIconBox>
          <BottomLabel>删自选</BottomLabel>
        </BottomItem>
        <BottomItem>
          <BottomIconBox>
            <svg width="34" height="34" viewBox="0 0 34 34">
              <path d="M0 0 H34 V34 H0 Z M4 4 V30 H30 V13 H21 V4 Z" fill="#333" fillRule="evenodd" />
              <path d="M6 28 L22 12 M11 12 H22 V23" fill="none" stroke="#333" strokeWidth="3.6" />
            </svg>
          </BottomIconBox>
        </BottomItem>
      </BottomBar>
      <BlurMark />
    </Page>
  );
}
